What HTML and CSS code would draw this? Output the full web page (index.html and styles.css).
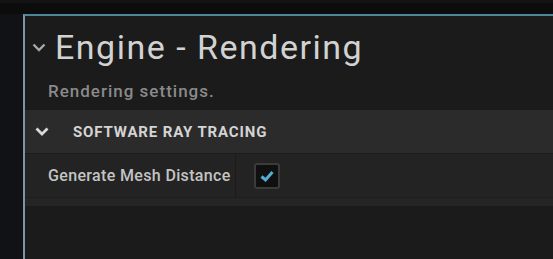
FILE: index.html
```html
<!DOCTYPE html>
<html>
<head>
<meta charset="utf-8">
<link rel="stylesheet" href="styles.css">
</head>
<body>
<div class="topstrip"></div>
<div class="panel">
  <div class="title-row">
    <svg class="title-chev" width="14" height="9" viewBox="0 0 14 9"><path d="M1.5 1.5 L7 7 L12.5 1.5" fill="none" stroke="#a8a8a8" stroke-width="2.4"/></svg>
    <span class="title">Engine - Rendering</span>
  </div>
  <div class="desc">Rendering settings.</div>
  <div class="section">
    <svg class="sec-chev" width="14" height="9" viewBox="0 0 14 9"><path d="M1.5 1.5 L7 7 L12.5 1.5" fill="none" stroke="#d8d8d8" stroke-width="2.8"/></svg>
    <span class="sec-title">SOFTWARE RAY TRACING</span>
  </div>
  <div class="row">
    <div class="row-label">Generate Mesh Distance</div>
    <div class="row-value">
      <div class="checkbox"><svg width="18" height="16" viewBox="0 0 18 16"><path d="M3.5 8.5 L7.5 12 L14.5 4" fill="none" stroke="#55aed0" stroke-width="3"/></svg></div>
    </div>
  </div>
  <div class="band"></div>
</div>
</body>
</html>
```
FILE: styles.css
```css
html, body { margin: 0; padding: 0; }
body {
  background: #111215;
  width: 553px;
  height: 259px;
  overflow: hidden;
  font-family: Roboto, "Liberation Sans", sans-serif;
}
.topstrip {
  height: 14px;
  background: #0c0c0c;
  border-top: 3px solid #141414;
  box-sizing: border-box;
}
.panel {
  margin-left: 23px;
  height: 245px;
  background: #1b1b1b;
  border-top: 2px solid #4f8597;
  border-left: 2px solid #7a96a6;
  display: flex;
  flex-direction: column;
}
.title-row {
  display: flex;
  align-items: center;
  height: 62px;
  padding-left: 7px;
}
.title-chev { margin-top: 1px; }
.title {
  margin-left: 9px;
  font-size: 34px;
  color: #d2d2d2;
  letter-spacing: 1.5px;
}
.desc {
  height: 32px;
  padding-left: 23px;
  font-size: 17px;
  font-weight: 500;
  color: #8a8a8a;
  line-height: 26px;
  letter-spacing: 1px;
}
.section {
  height: 43px;
  background: #2b2b2b;
  border-bottom: 1px solid #1c1c1c;
  display: flex;
  align-items: center;
  padding-left: 10px;
}
.sec-title {
  margin-left: 24px;
  font-size: 15px;
  font-weight: bold;
  color: #d4d4d4;
  letter-spacing: 0.85px;
}
.row {
  height: 43px;
  background: #232323;
  border-bottom: 1px solid #1d1d1d;
  display: flex;
}
.row-label {
  box-sizing: border-box;
  width: 211px;
  padding-left: 23px;
  border-right: 1px solid #1b1b1b;
  font-size: 16px;
  font-weight: 500;
  color: #c4c4c4;
  letter-spacing: 0.35px;
  display: flex;
  align-items: center;
}
.row-value {
  display: flex;
  align-items: center;
  padding-left: 18px;
}
.checkbox {
  width: 22px;
  height: 22px;
  border: 2px solid #3b3b3b;
  border-radius: 3px;
  background: #101010;
  display: flex;
  align-items: center;
  justify-content: center;
}
.band {
  height: 8px;
  background: #252525;
}
```
